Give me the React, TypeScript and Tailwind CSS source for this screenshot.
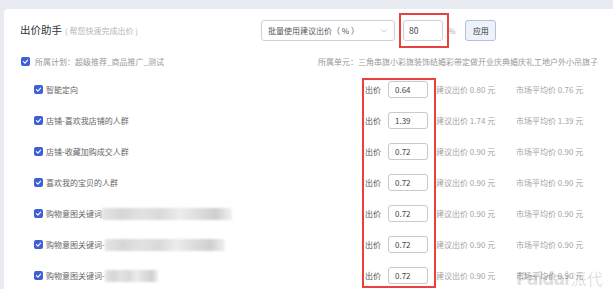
import { ChevronDown } from "lucide-react";

type Row = {
    label: string;
    bid: string;
    suggest: string;
    market: string;
    blur?: string;
};

const rows: Row[] = [
    { label: "智能定向", bid: "0.64", suggest: "0.80", market: "0.76" },
    { label: "店铺-喜欢我店铺的人群", bid: "1.39", suggest: "1.74", market: "1.39" },
    { label: "店铺-收藏加购成交人群", bid: "0.72", suggest: "0.90", market: "0.90" },
    { label: "喜欢我的宝贝的人群", bid: "0.72", suggest: "0.90", market: "0.90" },
    { label: "购物意图关键词", bid: "0.72", suggest: "0.90", market: "0.90", blur: "w-[130px]" },
    { label: "购物意图关键词-", bid: "0.72", suggest: "0.90", market: "0.90", blur: "w-[120px]" },
    { label: "购物意图关键词-", bid: "0.72", suggest: "0.90", market: "0.90", blur: "w-[53px]" },
];

const Check = () => (
    <span className="flex items-center justify-center w-[9px] h-[9px] rounded-[2px] bg-[#3f5fd6] shrink-0">
        <svg width="7" height="7" viewBox="0 0 10 10">
            <path d="M2 5.2 L4.2 7.2 L8 3" fill="none" stroke="white" strokeWidth="1.6" strokeLinecap="round" strokeLinejoin="round" />
        </svg>
    </span>
);

const App = () => {
    return (
        <div className="relative w-[613px] h-[289px] overflow-hidden bg-[#e9ebf2] pt-[9px] pl-[4px] font-['Noto_Sans_CJK_SC',sans-serif]">
            <div className="h-full bg-white rounded-tl-[4px] pt-[11px]">
                {/* Header */}
                <div className="flex items-center h-[21px] pl-4">
                    <div className="flex items-baseline w-[241px]">
                        <span className="text-[10.5px] leading-none text-[#333]">出价助手</span>
                        <span className="ml-[3px] text-[8px] leading-none text-[#b5b5b5]">( 帮您快速完成出价 )</span>
                    </div>
                    <div className="flex items-center justify-between w-[134px] h-[21px] border border-[#cfcfd4] rounded-[3px] pl-[6px] pr-[5px]">
                        <span className="text-[8px] leading-none text-[#555]">批量使用建议出价（ % ）</span>
                        <ChevronDown size={10} strokeWidth={1.3} color="#999" />
                    </div>
                    <div className="ml-[8px] flex items-center w-[40px] h-[21px] border border-[#cfcfd4] rounded-[3px] pl-[5px]">
                        <span className="text-[8.5px] leading-none text-[#444]">80</span>
                    </div>
                    <span className="ml-[5px] text-[8px] leading-none text-[#aaa]">%</span>
                    <div className="ml-[10px] flex items-center justify-center w-[31px] h-[21px] border border-[#b4bfda] rounded-[3px] bg-[#eef2fa]">
                        <span className="text-[8px] leading-none text-[#333]">应用</span>
                    </div>
                </div>

                {/* Plan / unit */}
                <div className="flex items-center h-[9px] mt-[16px] pl-[17px]">
                    <div className="flex items-center gap-[5px] w-[297px]">
                        <Check />
                        <span className="text-[8px] leading-none text-[#999]">所属计划：超级推荐_商品推广_测试</span>
                    </div>
                    <span className="text-[8px] leading-none text-[#999] whitespace-nowrap">所属单元：三角串旗小彩旗装饰结婚彩带定做开业庆典婚庆礼工地户外小吊旗子</span>
                </div>

                {/* Rows */}
                <div className="mt-[8px] pl-[30px]">
                    {rows.map((r, i) => (
                        <div key={i} className="flex items-center h-[31px]">
                            <div className="flex items-center gap-[3px] w-[331px]">
                                <Check />
                                <span className="text-[8px] leading-none text-[#666] whitespace-nowrap">{r.label}</span>
                                {r.blur && (
                                    <span className={`${r.blur} h-[12px] -ml-[3px] blur-[1px] bg-[linear-gradient(90deg,#e4e4e4,#d6d6d6_15%,#e2e2e2_30%,#d9d9d9_45%,#ececec_60%,#dcdcdc_75%,#cfcfcf_88%,#f2f2f2)]`} />
                                )}
                            </div>
                            <span className="w-[23px] text-[8px] leading-none text-[#555]">出价</span>
                            <div className="flex items-center w-[40px] h-[17px] border border-[#c9c9ce] rounded-[3px] pl-[6px]">
                                <span className="text-[8px] leading-none text-[#444]">{r.bid}</span>
                            </div>
                            <span className="ml-[8px] w-[80px] text-[8px] leading-none text-[#a3a3a3] whitespace-nowrap">建议出价 {r.suggest} 元</span>
                            <span className="text-[8px] leading-none text-[#a3a3a3] whitespace-nowrap">市场平均价 {r.market} 元</span>
                        </div>
                    ))}
                </div>
            </div>

            {/* Annotation boxes */}
            <div className="absolute left-[399px] top-[13px] w-[50px] h-[35px] border-2 border-[#e8413e]" />
            <div className="absolute left-[362px] top-[78px] w-[74px] h-[210px] border-2 border-[#e8413e]" />

            {/* Watermark */}
            <div aria-hidden="true" className="absolute left-[516px] top-[270px] flex items-baseline text-[#000]/15 leading-none pointer-events-none select-none">
                <span className="text-[17px] font-bold font-['DejaVu_Sans',sans-serif] tracking-[-1px]">Paidai</span>
                <span className="text-[16px] ml-[2px]">派代</span>
            </div>
        </div>
    );
};

export default App;
